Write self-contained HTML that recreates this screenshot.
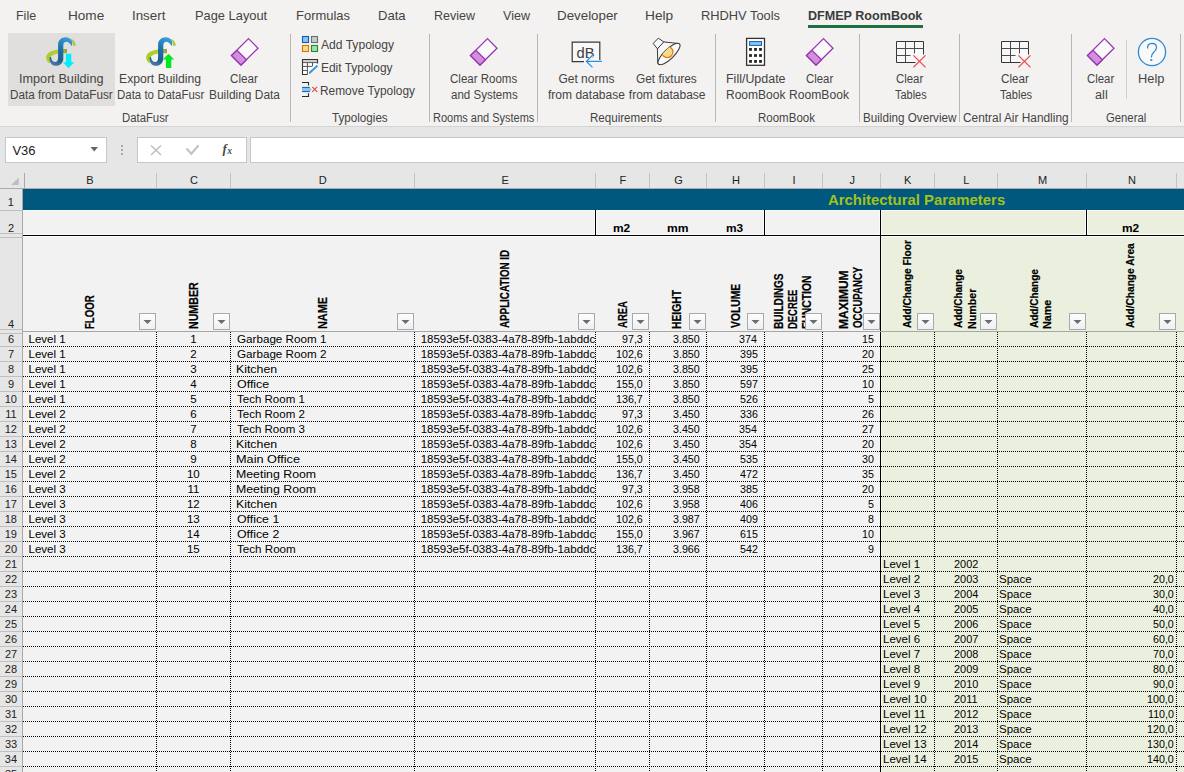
<!DOCTYPE html>
<html><head><meta charset="utf-8"><style>
html,body{margin:0;padding:0;width:1184px;height:772px;overflow:hidden;background:#f3f2f1;font-family:"Liberation Sans",sans-serif;}
.a{position:absolute}
.t{position:absolute;white-space:nowrap;transform-origin:0 0}
.fb{width:17px;height:17px;box-sizing:border-box;border:1px solid #a9a9a9;background:linear-gradient(#fdfdfd,#eef0f4)}
</style></head><body>
<div class="a" style="left:0px;top:0px;width:1184px;height:126px;background:#f3f2f1;"></div>
<div class="t" style="left:15.97px;top:9px;font-size:13px;line-height:13px;color:#444444;transform:scaleX(0.9583);">File</div>
<div class="t" style="left:67.88px;top:9px;font-size:13px;line-height:13px;color:#444444;transform:scaleX(1.0438);">Home</div>
<div class="t" style="left:131.77px;top:9px;font-size:13px;line-height:13px;color:#444444;transform:scaleX(1.0256);">Insert</div>
<div class="t" style="left:194.94px;top:9px;font-size:13px;line-height:13px;color:#444444;transform:scaleX(0.9885);">Page Layout</div>
<div class="t" style="left:295.93px;top:9px;font-size:13px;line-height:13px;color:#444444;transform:scaleX(0.9972);">Formulas</div>
<div class="t" style="left:377.92px;top:9px;font-size:13px;line-height:13px;color:#444444;transform:scaleX(1.0042);">Data</div>
<div class="t" style="left:433.97px;top:9px;font-size:13px;line-height:13px;color:#444444;transform:scaleX(0.9615);">Review</div>
<div class="t" style="left:502.94px;top:9px;font-size:13px;line-height:13px;color:#444444;transform:scaleX(0.9671);">View</div>
<div class="t" style="left:556.90px;top:9px;font-size:13px;line-height:13px;color:#444444;transform:scaleX(1.0262);">Developer</div>
<div class="t" style="left:644.87px;top:9px;font-size:13px;line-height:13px;color:#444444;transform:scaleX(1.0548);">Help</div>
<div class="t" style="left:700.94px;top:9px;font-size:13px;line-height:13px;color:#444444;transform:scaleX(0.9882);">RHDHV Tools</div>
<div class="t" style="left:807.65px;top:9px;font-size:13px;line-height:13px;color:#3c3c3c;font-weight:bold;transform:scaleX(0.9671);">DFMEP RoomBook</div>
<div class="a" style="left:808px;top:25px;width:115px;height:3px;background:#1d7044;"></div>
<div class="a" style="left:8px;top:33px;width:107px;height:73px;background:#e1dfdd;"></div>
<div class="a" style="left:290px;top:34px;width:1px;height:88px;background:#b9b7b5;"></div>
<div class="a" style="left:429px;top:34px;width:1px;height:88px;background:#b9b7b5;"></div>
<div class="a" style="left:537px;top:34px;width:1px;height:88px;background:#b9b7b5;"></div>
<div class="a" style="left:715px;top:34px;width:1px;height:88px;background:#b9b7b5;"></div>
<div class="a" style="left:859px;top:34px;width:1px;height:88px;background:#b9b7b5;"></div>
<div class="a" style="left:959px;top:34px;width:1px;height:88px;background:#b9b7b5;"></div>
<div class="a" style="left:1071px;top:34px;width:1px;height:88px;background:#b9b7b5;"></div>
<div class="a" style="left:1180px;top:34px;width:1px;height:88px;background:#b9b7b5;"></div>
<div class="a" style="left:1126px;top:40px;width:1px;height:59px;background:#d2d0ce;"></div>
<svg class="a" style="left:40px;top:32px" width="40" height="40" viewBox="0 0 40 40"><defs>
<linearGradient id="iab" gradientUnits="userSpaceOnUse" x1="28" y1="5" x2="14" y2="34"><stop offset="0" stop-color="#3f9fdc"/><stop offset="0.4" stop-color="#1b74b0"/><stop offset="0.75" stop-color="#205e8c"/><stop offset="1" stop-color="#4d80a6"/></linearGradient>
<linearGradient id="iag" gradientUnits="userSpaceOnUse" x1="6" y1="28" x2="27" y2="19"><stop offset="0" stop-color="#a9cf1c"/><stop offset="0.6" stop-color="#b3cc3a"/><stop offset="1" stop-color="#9a9f3c"/></linearGradient>
</defs>
<path d="M27,17 L27,21.2 C21,21 13.5,21.3 11,24.5 C9.8,26.5 9.6,29 9.6,31.8 C7,29.5 5.8,27 6.2,24.5 C7.5,18.5 17,17 27,17 Z" fill="url(#iag)"/>
<path d="M30.8,6.6 C33.6,7.8 35.4,10.5 35.8,13.6 L33.4,13.9 C33.1,11.2 32.3,9 30.8,6.6 Z" fill="#a6c62a"/>
<path d="M31.8,14.2 C33.5,9 30.5,5.2 25.8,5.2 C21,5.2 18.1,8.5 18.1,12.5 L18.1,25.5 C18.1,28.5 17,30 15,30 C12.5,30 11.5,28 10.9,24.8 L9.6,25.2 C8.9,30 11.5,33.8 16,33.8 C20.5,33.8 23.3,30.5 23.3,26.5 L23.3,13.5 C23.3,11 24.5,9.8 26.3,9.8 C28.5,9.8 30,11.5 31.8,14.2 Z" fill="url(#iab)"/>
<path d="M25.9,21.8 H31.3 V30.3 H34.2 L28.5,36.3 L22.8,30.3 H25.9 Z" fill="#00eeff"/></svg>
<div class="t" style="left:18.83px;top:73px;font-size:12px;line-height:12px;color:#444444;transform:scaleX(1.0553);">Import Building</div>
<div class="t" style="left:9.54px;top:89px;font-size:12px;line-height:12px;color:#444444;transform:scaleX(0.9742);">Data from DataFusr</div>
<svg class="a" style="left:140px;top:32px" width="40" height="40" viewBox="0 0 40 40"><defs>
<linearGradient id="ibb" gradientUnits="userSpaceOnUse" x1="28" y1="5" x2="14" y2="34"><stop offset="0" stop-color="#3f9fdc"/><stop offset="0.4" stop-color="#1b74b0"/><stop offset="0.75" stop-color="#205e8c"/><stop offset="1" stop-color="#4d80a6"/></linearGradient>
<linearGradient id="ibg" gradientUnits="userSpaceOnUse" x1="6" y1="28" x2="27" y2="19"><stop offset="0" stop-color="#a9cf1c"/><stop offset="0.6" stop-color="#b3cc3a"/><stop offset="1" stop-color="#9a9f3c"/></linearGradient>
</defs>
<path d="M27,17 L27,21.2 C21,21 13.5,21.3 11,24.5 C9.8,26.5 9.6,29 9.6,31.8 C7,29.5 5.8,27 6.2,24.5 C7.5,18.5 17,17 27,17 Z" fill="url(#ibg)"/>
<path d="M30.8,6.6 C33.6,7.8 35.4,10.5 35.8,13.6 L33.4,13.9 C33.1,11.2 32.3,9 30.8,6.6 Z" fill="#a6c62a"/>
<path d="M31.8,14.2 C33.5,9 30.5,5.2 25.8,5.2 C21,5.2 18.1,8.5 18.1,12.5 L18.1,25.5 C18.1,28.5 17,30 15,30 C12.5,30 11.5,28 10.9,24.8 L9.6,25.2 C8.9,30 11.5,33.8 16,33.8 C20.5,33.8 23.3,30.5 23.3,26.5 L23.3,13.5 C23.3,11 24.5,9.8 26.3,9.8 C28.5,9.8 30,11.5 31.8,14.2 Z" fill="url(#ibb)"/>
<path d="M28.5,21.8 L34.2,27.5 H31.3 V36 H25.9 V27.5 H22.8 Z" fill="#00e81e"/></svg>
<div class="t" style="left:119.49px;top:73px;font-size:12px;line-height:12px;color:#444444;transform:scaleX(1.0163);">Export Building</div>
<div class="t" style="left:116.55px;top:89px;font-size:12px;line-height:12px;color:#444444;transform:scaleX(0.9561);">Data to DataFusr</div>
<svg class="a" style="left:226px;top:34px" width="36" height="36" viewBox="0 0 36 36"><polygon points="22.5,4.6 32,14.2 15,31 5.5,21.5" fill="#fafafa" stroke="#9b35b3" stroke-width="1.3" stroke-linejoin="miter"/>
<polygon points="5.5,21.5 11,16.3 20.5,25.8 15,31" fill="#d48fdc" stroke="#9b35b3" stroke-width="1.3"/></svg>
<div class="t" style="left:230.42px;top:73px;font-size:12px;line-height:12px;color:#444444;transform:scaleX(0.9677);">Clear</div>
<div class="t" style="left:208.52px;top:89px;font-size:12px;line-height:12px;color:#444444;transform:scaleX(0.9942);">Building Data</div>
<svg class="a" style="left:298px;top:32px" width="24" height="24" viewBox="0 0 24 24"><rect x="4.5" y="4.5" width="6" height="6" fill="#8ec3ef" stroke="#0a62b8" stroke-width="1.1"/>
<rect x="13.5" y="4.5" width="6" height="6" fill="#cacaca" stroke="#6e6e6e" stroke-width="1.1"/>
<rect x="4.5" y="13.5" width="6" height="6" fill="#f7dc8e" stroke="#e07008" stroke-width="1.1"/>
<rect x="13.5" y="13.5" width="6" height="6" fill="#a2dfab" stroke="#1f8a3a" stroke-width="1.1"/></svg>
<div class="t" style="left:320.97px;top:39px;font-size:12px;line-height:12px;color:#444444;transform:scaleX(1.0076);">Add Typology</div>
<svg class="a" style="left:298px;top:56px" width="24" height="24" viewBox="0 0 24 24"><path d="M4.5,3.5 H19.5 V9 L10,18.5 H4.5 Z" fill="#fff"/>
<rect x="5" y="4" width="14.5" height="2.4" fill="#cfcfcf"/>
<path d="M9.5,18.5 H4.5 V3.5 H19.5 V7.5" fill="none" stroke="#333" stroke-width="1.1"/>
<path d="M4.5,6.6 H19.5 M4.5,10.4 H14 M4.5,14.4 H10 M9.4,6.6 V18.5 M14.5,6.6 V10.4" stroke="#555" stroke-width="1" fill="none"/>
<path d="M9.8,19.3 L10.6,15.2 L17.6,8.4 Q19.2,7.4 20.2,8.6 Q21,9.8 19.9,11.2 L13,18 Z" fill="#fff" opacity="0.9"/>
<path d="M10.8,18.3 L11.4,15.8 L18.1,9.4 Q19,8.8 19.6,9.4 Q20.1,10.1 19.4,10.9 L12.7,17.3 Z" fill="#1f86d6"/>
<path d="M12.6,15.9 L18.6,10.2" stroke="#bfe0f8" stroke-width="0.7" stroke-dasharray="1,1"/></svg>
<div class="t" style="left:320.51px;top:62px;font-size:12px;line-height:12px;color:#444444;transform:scaleX(0.9958);">Edit Typology</div>
<svg class="a" style="left:298px;top:78px" width="24" height="24" viewBox="0 0 24 24"><path d="M4,4.5 H10.5 V7.5 M4,18.5 H10.5 V15.3" fill="none" stroke="#2a2a2a" stroke-width="1.1"/>
<path d="M4,9.3 H11.8 L13.6,11.5 L11.8,13.7 H4 Z" fill="#8cc3ef"/>
<path d="M4,9.4 H11.8 M4,13.6 H11.8" stroke="#0a62b8" stroke-width="1"/>
<path d="M14.3,8.9 L19.2,13.8 M19.2,8.9 L14.3,13.8" stroke="#e84545" stroke-width="1.1"/></svg>
<div class="t" style="left:320.02px;top:85px;font-size:12px;line-height:12px;color:#444444;transform:scaleX(0.9916);">Remove Typology</div>
<svg class="a" style="left:465px;top:34px" width="36" height="36" viewBox="0 0 36 36"><polygon points="22.5,4.6 32,14.2 15,31 5.5,21.5" fill="#fafafa" stroke="#9b35b3" stroke-width="1.3" stroke-linejoin="miter"/>
<polygon points="5.5,21.5 11,16.3 20.5,25.8 15,31" fill="#d48fdc" stroke="#9b35b3" stroke-width="1.3"/></svg>
<div class="t" style="left:449.92px;top:73px;font-size:12px;line-height:12px;color:#444444;transform:scaleX(0.9601);">Clear Rooms</div>
<div class="t" style="left:450.51px;top:89px;font-size:12px;line-height:12px;color:#444444;transform:scaleX(0.9608);">and Systems</div>
<svg class="a" style="left:568px;top:36px" width="38" height="38" viewBox="0 0 38 38"><path d="M16,25.6 H4.2 V6.2 H31.8 V23.9" fill="#f8f8f8" stroke="#383838" stroke-width="1.2"/>
<text x="8.5" y="21.6" font-family="Liberation Sans" font-size="15.5" fill="#404040" textLength="18" lengthAdjust="spacingAndGlyphs">dB</text>
<path d="M34,25.4 H18.4 M24.5,19.3 L18.4,25.4 L24.5,31.4" fill="none" stroke="#f8f8f8" stroke-width="2.6"/>
<path d="M34,25.4 H18.4 M24.5,19.3 L18.4,25.4 L24.5,31.4" fill="none" stroke="#2b8fd6" stroke-width="1.3"/></svg>
<div class="t" style="left:558.40px;top:73px;font-size:12px;line-height:12px;color:#444444;">Get norms</div>
<div class="t" style="left:547.57px;top:89px;font-size:12px;line-height:12px;color:#444444;transform:scaleX(1.0030);">from database</div>
<svg class="a" style="left:648px;top:34px" width="38" height="38" viewBox="0 0 38 38"><defs><clipPath id="lampc"><ellipse cx="21" cy="20" rx="14.6" ry="4.9" transform="rotate(-44 21 20)"/></clipPath></defs>
<path d="M9.4,14.8 L15.8,7.9 L29.5,9.4 L31.5,11 L10.5,30.5 L9.8,29 Z" fill="#f8f8f8" stroke="#3a3a3a" stroke-width="1" stroke-linejoin="round"/>
<ellipse cx="21" cy="20" rx="14.6" ry="4.9" transform="rotate(-44 21 20)" fill="#fafafa" stroke="#3a3a3a" stroke-width="1.1"/>
<g clip-path="url(#lampc)"><circle cx="19.3" cy="18" r="5.6" fill="#f7d98a" stroke="#e3780e" stroke-width="1.2"/></g>
<path d="M5.2,9.4 L10.3,4.2 L15.8,7.9 L9.4,14.8 Z" fill="#f8f8f8" stroke="#3a3a3a" stroke-width="1" stroke-linejoin="round"/></svg>
<div class="t" style="left:636.41px;top:73px;font-size:12px;line-height:12px;color:#444444;transform:scaleX(0.9904);">Get fixtures</div>
<div class="t" style="left:628.82px;top:89px;font-size:12px;line-height:12px;color:#444444;">from database</div>
<svg class="a" style="left:738px;top:34px" width="34" height="34" viewBox="0 0 34 34"><rect x="8.6" y="4.4" width="17.9" height="26.9" fill="#fff" stroke="#333" stroke-width="1.3"/>
<rect x="11.6" y="7.6" width="11.9" height="3.8" fill="#8cc4f0" stroke="#0a62b8" stroke-width="1"/><rect x="11.1" y="14.0" width="2.8" height="2.8" fill="#222"/><rect x="16.1" y="14.0" width="2.8" height="2.8" fill="#222"/><rect x="21.1" y="14.0" width="2.8" height="2.8" fill="#222"/><rect x="11.1" y="20.1" width="2.8" height="2.8" fill="#222"/><rect x="16.1" y="20.1" width="2.8" height="2.8" fill="#222"/><rect x="21.1" y="20.1" width="2.8" height="2.8" fill="#222"/><rect x="11.1" y="26.0" width="2.8" height="2.8" fill="#222"/><rect x="16.1" y="26.0" width="2.8" height="2.8" fill="#222"/><rect x="21.1" y="26.0" width="2.8" height="2.8" fill="#222"/></svg>
<div class="t" style="left:725.97px;top:73px;font-size:12px;line-height:12px;color:#444444;transform:scaleX(1.0383);">Fill/Update</div>
<div class="t" style="left:725.51px;top:89px;font-size:12px;line-height:12px;color:#444444;transform:scaleX(1.0021);">RoomBook</div>
<svg class="a" style="left:801px;top:34px" width="36" height="36" viewBox="0 0 36 36"><polygon points="22.5,4.6 32,14.2 15,31 5.5,21.5" fill="#fafafa" stroke="#9b35b3" stroke-width="1.3" stroke-linejoin="miter"/>
<polygon points="5.5,21.5 11,16.3 20.5,25.8 15,31" fill="#d48fdc" stroke="#9b35b3" stroke-width="1.3"/></svg>
<div class="t" style="left:805.93px;top:73px;font-size:12px;line-height:12px;color:#444444;transform:scaleX(0.9498);">Clear</div>
<div class="t" style="left:789.00px;top:89px;font-size:12px;line-height:12px;color:#444444;transform:scaleX(1.0106);">RoomBook</div>
<svg class="a" style="left:892px;top:36px" width="38" height="38" viewBox="0 0 38 38"><path d="M4.5,5.5 H31.5 V18.5 L23.5,26.5 H4.5 Z" fill="#f8f8f8"/>
<path d="M23.5,26.5 H4.5 V5.5 H31.5 V18.5" fill="none" stroke="#363636" stroke-width="1"/>
<path d="M4.5,12.5 H31.5 M4.5,19.5 H18.5 M13.5,5.5 V26.5 M22.5,5.5 V17.5" fill="none" stroke="#4a4a4a" stroke-width="1"/>
<path d="M21.4,19.4 L33.5,31.4 M33.5,19.4 L21.4,31.4" stroke="#e94a52" stroke-width="1.3"/></svg>
<div class="t" style="left:895.93px;top:73px;font-size:12px;line-height:12px;color:#444444;transform:scaleX(0.9498);">Clear</div>
<div class="t" style="left:894.50px;top:89px;font-size:12px;line-height:12px;color:#444444;transform:scaleX(0.9120);">Tables</div>
<svg class="a" style="left:997px;top:36px" width="38" height="38" viewBox="0 0 38 38"><path d="M4.5,5.5 H31.5 V18.5 L23.5,26.5 H4.5 Z" fill="#f8f8f8"/>
<path d="M23.5,26.5 H4.5 V5.5 H31.5 V18.5" fill="none" stroke="#363636" stroke-width="1"/>
<path d="M4.5,12.5 H31.5 M4.5,19.5 H18.5 M13.5,5.5 V26.5 M22.5,5.5 V17.5" fill="none" stroke="#4a4a4a" stroke-width="1"/>
<path d="M21.4,19.4 L33.5,31.4 M33.5,19.4 L21.4,31.4" stroke="#e94a52" stroke-width="1.3"/></svg>
<div class="t" style="left:1001.42px;top:73px;font-size:12px;line-height:12px;color:#444444;transform:scaleX(0.9677);">Clear</div>
<div class="t" style="left:1000.25px;top:89px;font-size:12px;line-height:12px;color:#444444;transform:scaleX(0.9267);">Tables</div>
<svg class="a" style="left:1082px;top:34px" width="36" height="36" viewBox="0 0 36 36"><polygon points="22.5,4.6 32,14.2 15,31 5.5,21.5" fill="#fafafa" stroke="#9b35b3" stroke-width="1.3" stroke-linejoin="miter"/>
<polygon points="5.5,21.5 11,16.3 20.5,25.8 15,31" fill="#d48fdc" stroke="#9b35b3" stroke-width="1.3"/></svg>
<div class="t" style="left:1086.93px;top:73px;font-size:12px;line-height:12px;color:#444444;transform:scaleX(0.9498);">Clear</div>
<div class="t" style="left:1094.76px;top:89px;font-size:12px;line-height:12px;color:#444444;transform:scaleX(1.0581);">all</div>
<svg class="a" style="left:1134px;top:34px" width="36" height="36" viewBox="0 0 36 36"><circle cx="18" cy="18" r="13.6" fill="#f9f9f9" stroke="#2b8ad6" stroke-width="1.3"/>
<path d="M13.6,14.5 Q13.2,9.5 18,9.4 Q22.5,9.5 22.5,13.5 Q22.5,16 19.5,18.5 Q17.3,20.5 17.3,23.5" fill="none" stroke="#2b8ad6" stroke-width="1.3"/>
<rect x="16.3" y="25.1" width="2" height="1.8" fill="#2b8ad6"/></svg>
<div class="t" style="left:1137.94px;top:73px;font-size:12px;line-height:12px;color:#444444;transform:scaleX(1.0694);">Help</div>
<div class="t" style="left:121.57px;top:111.75px;font-size:12px;line-height:12px;color:#444444;transform:scaleX(0.9444);">DataFusr</div>
<div class="t" style="left:331.74px;top:111.75px;font-size:12px;line-height:12px;color:#444444;transform:scaleX(0.9705);">Typologies</div>
<div class="t" style="left:432.59px;top:111.75px;font-size:12px;line-height:12px;color:#444444;transform:scaleX(0.9150);">Rooms and Systems</div>
<div class="t" style="left:590.04px;top:111.75px;font-size:12px;line-height:12px;color:#444444;transform:scaleX(0.9653);">Requirements</div>
<div class="t" style="left:758.05px;top:111.75px;font-size:12px;line-height:12px;color:#444444;transform:scaleX(0.9592);">RoomBook</div>
<div class="t" style="left:862.54px;top:111.75px;font-size:12px;line-height:12px;color:#444444;transform:scaleX(0.9727);">Building Overview</div>
<div class="t" style="left:962.91px;top:111.75px;font-size:12px;line-height:12px;color:#444444;transform:scaleX(0.9895);">Central Air Handling</div>
<div class="t" style="left:1106.03px;top:111.75px;font-size:12px;line-height:12px;color:#444444;transform:scaleX(0.9423);">General</div>
<div class="a" style="left:0px;top:126px;width:1184px;height:1px;background:#d6d4d2;"></div>
<div class="a" style="left:0px;top:127px;width:1184px;height:45px;background:#e6e6e6;"></div>
<div class="a" style="left:5px;top:137px;width:102px;height:26px;background:#fff;box-sizing:border-box;border:1px solid #c6c6c6;"></div>
<div class="t" style="left:12.43px;top:144px;font-size:13px;line-height:13px;color:#222;">V36</div>
<svg class="a" style="left:88px;top:144px" width="12" height="10" viewBox="0 0 12 10"><path d="M2.5,3 H10 L6.25,7.5 Z" fill="#666"/></svg>
<div class="a" style="left:121px;top:145px;width:2px;height:2px;background:#a6a6a6;"></div>
<div class="a" style="left:121px;top:149px;width:2px;height:2px;background:#a6a6a6;"></div>
<div class="a" style="left:121px;top:153px;width:2px;height:2px;background:#a6a6a6;"></div>
<div class="a" style="left:137px;top:137px;width:110px;height:26px;background:#fff;box-sizing:border-box;border:1px solid #c6c6c6;"></div>
<svg class="a" style="left:148px;top:143px" width="16" height="14" viewBox="0 0 16 14"><path d="M3,2.5 L13,12 M13,2.5 L3,12" stroke="#bdbdbd" stroke-width="1.4"/></svg>
<svg class="a" style="left:184px;top:143px" width="18" height="14" viewBox="0 0 18 14"><path d="M2.5,5.5 L7.3,10.8 L14.6,2.3" fill="none" stroke="#c4c4c4" stroke-width="2.2"/></svg>
<svg class="a" style="left:218px;top:140px" width="20" height="20"><text x="4.5" y="13.4" font-family="Liberation Serif" font-style="italic" font-weight="bold" font-size="13" fill="#4a4a4a">f</text><text x="9.3" y="13.7" font-family="Liberation Serif" font-style="italic" font-weight="bold" font-size="9.5" fill="#4a4a4a">x</text></svg>
<div class="a" style="left:250px;top:137px;width:940px;height:26px;background:#fff;box-sizing:border-box;border:1px solid #c6c6c6;"></div>
<div class="a" style="left:0px;top:172px;width:1184px;height:16px;background:#e6e6e6;"></div>
<div class="a" style="left:0px;top:188px;width:1184px;height:1px;background:#ababab;"></div>
<svg class="a" style="left:8px;top:174px" width="14" height="14" viewBox="0 0 14 14"><path d="M3,11 H10.75 V3.5 Z" fill="#bdbdbd"/></svg>
<div class="a" style="left:24px;top:173px;width:1px;height:15px;background:#a9a9a9;"></div>
<div class="a" style="left:156px;top:173px;width:1px;height:15px;background:#c4c4c4;"></div>
<div class="t" style="left:86.16px;top:175px;font-size:11px;line-height:11px;color:#222;">B</div>
<div class="a" style="left:230px;top:173px;width:1px;height:15px;background:#c4c4c4;"></div>
<div class="t" style="left:189.96px;top:175px;font-size:11px;line-height:11px;color:#222;">C</div>
<div class="a" style="left:414px;top:173px;width:1px;height:15px;background:#c4c4c4;"></div>
<div class="t" style="left:318.83px;top:175px;font-size:11px;line-height:11px;color:#222;">D</div>
<div class="a" style="left:595px;top:173px;width:1px;height:15px;background:#c4c4c4;"></div>
<div class="t" style="left:501.61px;top:175px;font-size:11px;line-height:11px;color:#222;">E</div>
<div class="a" style="left:649px;top:173px;width:1px;height:15px;background:#c4c4c4;"></div>
<div class="t" style="left:619.41px;top:175px;font-size:11px;line-height:11px;color:#222;">F</div>
<div class="a" style="left:706px;top:173px;width:1px;height:15px;background:#c4c4c4;"></div>
<div class="t" style="left:674.36px;top:175px;font-size:11px;line-height:11px;color:#222;">G</div>
<div class="a" style="left:764px;top:173px;width:1px;height:15px;background:#c4c4c4;"></div>
<div class="t" style="left:732.03px;top:175px;font-size:11px;line-height:11px;color:#222;">H</div>
<div class="a" style="left:822px;top:173px;width:1px;height:15px;background:#c4c4c4;"></div>
<div class="t" style="left:792.47px;top:175px;font-size:11px;line-height:11px;color:#222;">I</div>
<div class="a" style="left:880px;top:173px;width:1px;height:15px;background:#c4c4c4;"></div>
<div class="t" style="left:849.58px;top:175px;font-size:11px;line-height:11px;color:#222;">J</div>
<div class="a" style="left:934px;top:173px;width:1px;height:15px;background:#c4c4c4;"></div>
<div class="t" style="left:903.94px;top:175px;font-size:11px;line-height:11px;color:#222;">K</div>
<div class="a" style="left:997px;top:173px;width:1px;height:15px;background:#c4c4c4;"></div>
<div class="t" style="left:963.17px;top:175px;font-size:11px;line-height:11px;color:#222;">L</div>
<div class="a" style="left:1086px;top:173px;width:1px;height:15px;background:#c4c4c4;"></div>
<div class="t" style="left:1037.92px;top:175px;font-size:11px;line-height:11px;color:#222;">M</div>
<div class="a" style="left:1176px;top:173px;width:1px;height:15px;background:#c4c4c4;"></div>
<div class="t" style="left:1128.03px;top:175px;font-size:11px;line-height:11px;color:#222;">N</div>
<div class="a" style="left:0px;top:189px;width:22px;height:583px;background:#e6e6e6;"></div>
<div class="a" style="left:22px;top:189px;width:1px;height:583px;background:#a8a8a8;"></div>
<div class="a" style="left:0px;top:210px;width:22px;height:1px;background:#c0c0c0;"></div>
<div class="a" style="left:0px;top:233px;width:22px;height:1px;background:#c0c0c0;"></div>
<div class="a" style="left:0px;top:237px;width:22px;height:1px;background:#c0c0c0;"></div>
<div class="a" style="left:0px;top:329px;width:22px;height:1px;background:#c0c0c0;"></div>
<div class="a" style="left:0px;top:333px;width:22px;height:1px;background:#c0c0c0;"></div>
<div class="t" style="left:7.80px;top:197px;font-size:11px;line-height:11px;color:#222;">1</div>
<div class="t" style="left:7.95px;top:223px;font-size:11px;line-height:11px;color:#222;">2</div>
<div class="t" style="left:7.98px;top:319px;font-size:11px;line-height:11px;color:#222;">4</div>
<div class="a" style="left:0px;top:346px;width:22px;height:1px;background:#c0c0c0;"></div>
<div class="t" style="left:7.91px;top:334px;font-size:11px;line-height:11px;color:#222;">6</div>
<div class="a" style="left:0px;top:361px;width:22px;height:1px;background:#c0c0c0;"></div>
<div class="t" style="left:7.95px;top:349px;font-size:11px;line-height:11px;color:#222;">7</div>
<div class="a" style="left:0px;top:376px;width:22px;height:1px;background:#c0c0c0;"></div>
<div class="t" style="left:7.95px;top:364px;font-size:11px;line-height:11px;color:#222;">8</div>
<div class="a" style="left:0px;top:391px;width:22px;height:1px;background:#c0c0c0;"></div>
<div class="t" style="left:7.93px;top:379px;font-size:11px;line-height:11px;color:#222;">9</div>
<div class="a" style="left:0px;top:406px;width:22px;height:1px;background:#c0c0c0;"></div>
<div class="t" style="left:4.69px;top:394px;font-size:11px;line-height:11px;color:#222;">10</div>
<div class="a" style="left:0px;top:421px;width:22px;height:1px;background:#c0c0c0;"></div>
<div class="t" style="left:5.14px;top:409px;font-size:11px;line-height:11px;color:#222;">11</div>
<div class="a" style="left:0px;top:436px;width:22px;height:1px;background:#c0c0c0;"></div>
<div class="t" style="left:4.76px;top:424px;font-size:11px;line-height:11px;color:#222;">12</div>
<div class="a" style="left:0px;top:451px;width:22px;height:1px;background:#c0c0c0;"></div>
<div class="t" style="left:4.72px;top:439px;font-size:11px;line-height:11px;color:#222;">13</div>
<div class="a" style="left:0px;top:466px;width:22px;height:1px;background:#c0c0c0;"></div>
<div class="t" style="left:4.63px;top:454px;font-size:11px;line-height:11px;color:#222;">14</div>
<div class="a" style="left:0px;top:481px;width:22px;height:1px;background:#c0c0c0;"></div>
<div class="t" style="left:4.70px;top:469px;font-size:11px;line-height:11px;color:#222;">15</div>
<div class="a" style="left:0px;top:496px;width:22px;height:1px;background:#c0c0c0;"></div>
<div class="t" style="left:4.72px;top:484px;font-size:11px;line-height:11px;color:#222;">16</div>
<div class="a" style="left:0px;top:511px;width:22px;height:1px;background:#c0c0c0;"></div>
<div class="t" style="left:4.76px;top:499px;font-size:11px;line-height:11px;color:#222;">17</div>
<div class="a" style="left:0px;top:526px;width:22px;height:1px;background:#c0c0c0;"></div>
<div class="t" style="left:4.72px;top:514px;font-size:11px;line-height:11px;color:#222;">18</div>
<div class="a" style="left:0px;top:541px;width:22px;height:1px;background:#c0c0c0;"></div>
<div class="t" style="left:4.73px;top:529px;font-size:11px;line-height:11px;color:#222;">19</div>
<div class="a" style="left:0px;top:556px;width:22px;height:1px;background:#c0c0c0;"></div>
<div class="t" style="left:4.83px;top:544px;font-size:11px;line-height:11px;color:#222;">20</div>
<div class="a" style="left:0px;top:571px;width:22px;height:1px;background:#c0c0c0;"></div>
<div class="t" style="left:4.88px;top:559px;font-size:11px;line-height:11px;color:#222;">21</div>
<div class="a" style="left:0px;top:586px;width:22px;height:1px;background:#c0c0c0;"></div>
<div class="t" style="left:4.89px;top:574px;font-size:11px;line-height:11px;color:#222;">22</div>
<div class="a" style="left:0px;top:601px;width:22px;height:1px;background:#c0c0c0;"></div>
<div class="t" style="left:4.85px;top:589px;font-size:11px;line-height:11px;color:#222;">23</div>
<div class="a" style="left:0px;top:616px;width:22px;height:1px;background:#c0c0c0;"></div>
<div class="t" style="left:4.77px;top:604px;font-size:11px;line-height:11px;color:#222;">24</div>
<div class="a" style="left:0px;top:631px;width:22px;height:1px;background:#c0c0c0;"></div>
<div class="t" style="left:4.84px;top:619px;font-size:11px;line-height:11px;color:#222;">25</div>
<div class="a" style="left:0px;top:646px;width:22px;height:1px;background:#c0c0c0;"></div>
<div class="t" style="left:4.85px;top:634px;font-size:11px;line-height:11px;color:#222;">26</div>
<div class="a" style="left:0px;top:661px;width:22px;height:1px;background:#c0c0c0;"></div>
<div class="t" style="left:4.89px;top:649px;font-size:11px;line-height:11px;color:#222;">27</div>
<div class="a" style="left:0px;top:676px;width:22px;height:1px;background:#c0c0c0;"></div>
<div class="t" style="left:4.85px;top:664px;font-size:11px;line-height:11px;color:#222;">28</div>
<div class="a" style="left:0px;top:691px;width:22px;height:1px;background:#c0c0c0;"></div>
<div class="t" style="left:4.87px;top:679px;font-size:11px;line-height:11px;color:#222;">29</div>
<div class="a" style="left:0px;top:706px;width:22px;height:1px;background:#c0c0c0;"></div>
<div class="t" style="left:4.89px;top:694px;font-size:11px;line-height:11px;color:#222;">30</div>
<div class="a" style="left:0px;top:721px;width:22px;height:1px;background:#c0c0c0;"></div>
<div class="t" style="left:4.95px;top:709px;font-size:11px;line-height:11px;color:#222;">31</div>
<div class="a" style="left:0px;top:736px;width:22px;height:1px;background:#c0c0c0;"></div>
<div class="t" style="left:4.96px;top:724px;font-size:11px;line-height:11px;color:#222;">32</div>
<div class="a" style="left:0px;top:751px;width:22px;height:1px;background:#c0c0c0;"></div>
<div class="t" style="left:4.92px;top:739px;font-size:11px;line-height:11px;color:#222;">33</div>
<div class="a" style="left:0px;top:766px;width:22px;height:1px;background:#c0c0c0;"></div>
<div class="t" style="left:4.84px;top:754px;font-size:11px;line-height:11px;color:#222;">34</div>
<div class="a" style="left:0px;top:781px;width:22px;height:1px;background:#c0c0c0;"></div>
<div class="t" style="left:4.91px;top:769px;font-size:11px;line-height:11px;color:#222;">35</div>
<div class="a" style="left:23px;top:189px;width:1161px;height:21px;background:#00587e;"></div>
<div class="a" style="left:23px;top:210px;width:1161px;height:1px;background:#fafafa;"></div>
<div class="a" style="left:23px;top:211px;width:858px;height:121px;background:#f2f2f2;"></div>
<div class="a" style="left:881px;top:211px;width:303px;height:121px;background:#ebf0de;"></div>
<div class="a" style="left:23px;top:332px;width:858px;height:440px;background:#f2f2f2;"></div>
<div class="a" style="left:881px;top:332px;width:303px;height:440px;background:#ebf0de;"></div>
<div class="t" style="left:828.13px;top:192px;font-size:15px;line-height:15px;color:#a3c21a;font-weight:bold;transform:scaleX(0.9930);">Architectural Parameters</div>
<div class="a" style="left:23px;top:235px;width:1161px;height:1px;background:#000;"></div>
<div class="a" style="left:23px;top:234px;width:1161px;height:1px;background:#fdfdfd;"></div>
<div class="a" style="left:23px;top:236px;width:1161px;height:1px;background:#fdfdfd;"></div>
<div class="a" style="left:594px;top:211px;width:3px;height:24px;background:#fbfbfb;"></div>
<div class="a" style="left:595px;top:210px;width:1px;height:26px;background:#000;"></div>
<div class="a" style="left:763px;top:211px;width:3px;height:24px;background:#fbfbfb;"></div>
<div class="a" style="left:764px;top:210px;width:1px;height:26px;background:#000;"></div>
<div class="a" style="left:1085px;top:211px;width:3px;height:24px;background:#fbfbfb;"></div>
<div class="a" style="left:1086px;top:210px;width:1px;height:26px;background:#000;"></div>
<div class="a" style="left:879px;top:211px;width:3px;height:24px;background:#fbfbfb;"></div>
<div class="a" style="left:881px;top:236px;width:1px;height:536px;background:#f3f6e6;"></div>
<div class="a" style="left:880px;top:210px;width:1px;height:562px;background:#000;"></div>
<div class="a" style="left:23px;top:331px;width:1161px;height:1px;background:#a6a6a6;"></div>
<div class="t" style="left:613.23px;top:223px;font-size:11px;line-height:11px;color:#000;font-weight:bold;transform:scaleX(1.0835);">m2</div>
<div class="t" style="left:667.21px;top:223px;font-size:11px;line-height:11px;color:#000;font-weight:bold;transform:scaleX(1.1003);">mm</div>
<div class="t" style="left:726.23px;top:223px;font-size:11px;line-height:11px;color:#000;font-weight:bold;transform:scaleX(1.0814);">m3</div>
<div class="t" style="left:1122.23px;top:223px;font-size:11px;line-height:11px;color:#000;font-weight:bold;transform:scaleX(1.0835);">m2</div>
<div class="t" style="left:83.97px;top:328.65px;font-size:12px;line-height:12px;color:#000;font-weight:bold;transform:rotate(-90deg) scaleX(0.8003);-webkit-text-stroke:0.2px #000;">FLOOR</div>
<div class="t" style="left:187.60px;top:328.72px;font-size:12px;line-height:12px;color:#000;font-weight:bold;transform:rotate(-90deg) scaleX(0.8866);-webkit-text-stroke:0.2px #000;">NUMBER</div>
<div class="t" style="left:316.85px;top:328.73px;font-size:12px;line-height:12px;color:#000;font-weight:bold;transform:rotate(-90deg) scaleX(0.9031);-webkit-text-stroke:0.2px #000;">NAME</div>
<div class="t" style="left:498.72px;top:328.24px;font-size:12px;line-height:12px;color:#000;font-weight:bold;transform:rotate(-90deg) scaleX(0.8160);-webkit-text-stroke:0.2px #000;">APPLICATION ID</div>
<div class="t" style="left:617.10px;top:328.24px;font-size:12px;line-height:12px;color:#000;font-weight:bold;transform:rotate(-90deg) scaleX(0.7937);-webkit-text-stroke:0.2px #000;">AREA</div>
<div class="t" style="left:671.47px;top:328.70px;font-size:12px;line-height:12px;color:#000;font-weight:bold;transform:rotate(-90deg) scaleX(0.8615);-webkit-text-stroke:0.2px #000;">HEIGHT</div>
<div class="t" style="left:729.72px;top:328.08px;font-size:12px;line-height:12px;color:#000;font-weight:bold;transform:rotate(-90deg) scaleX(0.8619);-webkit-text-stroke:0.2px #000;">VOLUME</div>
<div class="t" style="left:772.97px;top:328.68px;font-size:12px;line-height:12px;color:#000;font-weight:bold;transform:rotate(-90deg) scaleX(0.8422);-webkit-text-stroke:0.2px #000;">BUILDINGS</div>
<div class="t" style="left:787.22px;top:328.64px;font-size:12px;line-height:12px;color:#000;font-weight:bold;transform:rotate(-90deg) scaleX(0.7851);-webkit-text-stroke:0.2px #000;">DECREE</div>
<div class="t" style="left:801.47px;top:328.70px;font-size:12px;line-height:12px;color:#000;font-weight:bold;transform:rotate(-90deg) scaleX(0.8611);-webkit-text-stroke:0.2px #000;">FUNCTION</div>
<div class="t" style="left:838.35px;top:328.81px;font-size:12px;line-height:12px;color:#000;font-weight:bold;transform:rotate(-90deg) scaleX(0.9989);-webkit-text-stroke:0.2px #000;">MAXIMUM</div>
<div class="t" style="left:852.22px;top:328.38px;font-size:12px;line-height:12px;color:#000;font-weight:bold;transform:rotate(-90deg) scaleX(0.8017);-webkit-text-stroke:0.2px #000;">OCCUPANCY</div>
<div class="t" style="left:902.08px;top:328.25px;font-size:11px;line-height:11px;color:#000;font-weight:bold;transform:rotate(-90deg) scaleX(0.9220);-webkit-text-stroke:0.2px #000;">Add/Change Floor</div>
<div class="t" style="left:952.83px;top:328.25px;font-size:11px;line-height:11px;color:#000;font-weight:bold;transform:rotate(-90deg) scaleX(0.9083);-webkit-text-stroke:0.2px #000;">Add/Change</div>
<div class="t" style="left:967.08px;top:328.72px;font-size:11px;line-height:11px;color:#000;font-weight:bold;transform:rotate(-90deg) scaleX(0.9712);-webkit-text-stroke:0.2px #000;">Number</div>
<div class="t" style="left:1028.57px;top:328.25px;font-size:11px;line-height:11px;color:#000;font-weight:bold;transform:rotate(-90deg) scaleX(0.9083);-webkit-text-stroke:0.2px #000;">Add/Change</div>
<div class="t" style="left:1042.41px;top:328.73px;font-size:11px;line-height:11px;color:#000;font-weight:bold;transform:rotate(-90deg) scaleX(0.9793);-webkit-text-stroke:0.2px #000;">Name</div>
<div class="t" style="left:1125.32px;top:328.25px;font-size:11px;line-height:11px;color:#000;font-weight:bold;transform:rotate(-90deg) scaleX(0.9216);-webkit-text-stroke:0.2px #000;">Add/Change Area</div>
<div class="a fb" style="left:139px;top:313px"></div>
<svg class="a" style="left:139px;top:313px" width="17" height="17" viewBox="0 0 17 17"><path d="M4.5,7 H12.5 L8.5,11 Z" fill="#6b6b6b"/></svg>
<div class="a fb" style="left:213px;top:313px"></div>
<svg class="a" style="left:213px;top:313px" width="17" height="17" viewBox="0 0 17 17"><path d="M4.5,7 H12.5 L8.5,11 Z" fill="#6b6b6b"/></svg>
<div class="a fb" style="left:397px;top:313px"></div>
<svg class="a" style="left:397px;top:313px" width="17" height="17" viewBox="0 0 17 17"><path d="M4.5,7 H12.5 L8.5,11 Z" fill="#6b6b6b"/></svg>
<div class="a fb" style="left:578px;top:313px"></div>
<svg class="a" style="left:578px;top:313px" width="17" height="17" viewBox="0 0 17 17"><path d="M4.5,7 H12.5 L8.5,11 Z" fill="#6b6b6b"/></svg>
<div class="a fb" style="left:632px;top:313px"></div>
<svg class="a" style="left:632px;top:313px" width="17" height="17" viewBox="0 0 17 17"><path d="M4.5,7 H12.5 L8.5,11 Z" fill="#6b6b6b"/></svg>
<div class="a fb" style="left:689px;top:313px"></div>
<svg class="a" style="left:689px;top:313px" width="17" height="17" viewBox="0 0 17 17"><path d="M4.5,7 H12.5 L8.5,11 Z" fill="#6b6b6b"/></svg>
<div class="a fb" style="left:747px;top:313px"></div>
<svg class="a" style="left:747px;top:313px" width="17" height="17" viewBox="0 0 17 17"><path d="M4.5,7 H12.5 L8.5,11 Z" fill="#6b6b6b"/></svg>
<div class="a fb" style="left:805px;top:313px"></div>
<svg class="a" style="left:805px;top:313px" width="17" height="17" viewBox="0 0 17 17"><path d="M4.5,7 H12.5 L8.5,11 Z" fill="#6b6b6b"/></svg>
<div class="a fb" style="left:863px;top:313px"></div>
<svg class="a" style="left:863px;top:313px" width="17" height="17" viewBox="0 0 17 17"><path d="M4.5,7 H12.5 L8.5,11 Z" fill="#6b6b6b"/></svg>
<div class="a fb" style="left:917px;top:313px"></div>
<svg class="a" style="left:917px;top:313px" width="17" height="17" viewBox="0 0 17 17"><path d="M4.5,7 H12.5 L8.5,11 Z" fill="#6b6b6b"/></svg>
<div class="a fb" style="left:980px;top:313px"></div>
<svg class="a" style="left:980px;top:313px" width="17" height="17" viewBox="0 0 17 17"><path d="M4.5,7 H12.5 L8.5,11 Z" fill="#6b6b6b"/></svg>
<div class="a fb" style="left:1069px;top:313px"></div>
<svg class="a" style="left:1069px;top:313px" width="17" height="17" viewBox="0 0 17 17"><path d="M4.5,7 H12.5 L8.5,11 Z" fill="#6b6b6b"/></svg>
<div class="a fb" style="left:1159px;top:313px"></div>
<svg class="a" style="left:1159px;top:313px" width="17" height="17" viewBox="0 0 17 17"><path d="M4.5,7 H12.5 L8.5,11 Z" fill="#6b6b6b"/></svg>
<svg class="a" style="left:0;top:0" width="1184" height="772"><g stroke="#000" stroke-width="1" stroke-dasharray="1,1" shape-rendering="crispEdges"><line x1="23" y1="346.5" x2="1184" y2="346.5"/><line x1="23" y1="361.5" x2="1184" y2="361.5"/><line x1="23" y1="376.5" x2="1184" y2="376.5"/><line x1="23" y1="391.5" x2="1184" y2="391.5"/><line x1="23" y1="406.5" x2="1184" y2="406.5"/><line x1="23" y1="421.5" x2="1184" y2="421.5"/><line x1="23" y1="436.5" x2="1184" y2="436.5"/><line x1="23" y1="451.5" x2="1184" y2="451.5"/><line x1="23" y1="466.5" x2="1184" y2="466.5"/><line x1="23" y1="481.5" x2="1184" y2="481.5"/><line x1="23" y1="496.5" x2="1184" y2="496.5"/><line x1="23" y1="511.5" x2="1184" y2="511.5"/><line x1="23" y1="526.5" x2="1184" y2="526.5"/><line x1="23" y1="541.5" x2="1184" y2="541.5"/><line x1="23" y1="556.5" x2="1184" y2="556.5"/><line x1="23" y1="571.5" x2="1184" y2="571.5"/><line x1="23" y1="586.5" x2="1184" y2="586.5"/><line x1="23" y1="601.5" x2="1184" y2="601.5"/><line x1="23" y1="616.5" x2="1184" y2="616.5"/><line x1="23" y1="631.5" x2="1184" y2="631.5"/><line x1="23" y1="646.5" x2="1184" y2="646.5"/><line x1="23" y1="661.5" x2="1184" y2="661.5"/><line x1="23" y1="676.5" x2="1184" y2="676.5"/><line x1="23" y1="691.5" x2="1184" y2="691.5"/><line x1="23" y1="706.5" x2="1184" y2="706.5"/><line x1="23" y1="721.5" x2="1184" y2="721.5"/><line x1="23" y1="736.5" x2="1184" y2="736.5"/><line x1="23" y1="751.5" x2="1184" y2="751.5"/><line x1="23" y1="766.5" x2="1184" y2="766.5"/><line x1="156.5" y1="332" x2="156.5" y2="772"/><line x1="230.5" y1="332" x2="230.5" y2="772"/><line x1="414.5" y1="332" x2="414.5" y2="772"/><line x1="595.5" y1="332" x2="595.5" y2="772"/><line x1="649.5" y1="332" x2="649.5" y2="772"/><line x1="706.5" y1="332" x2="706.5" y2="772"/><line x1="764.5" y1="332" x2="764.5" y2="772"/><line x1="822.5" y1="332" x2="822.5" y2="772"/><line x1="934.5" y1="332" x2="934.5" y2="772"/><line x1="997.5" y1="332" x2="997.5" y2="772"/><line x1="1086.5" y1="332" x2="1086.5" y2="772"/><line x1="1176.5" y1="332" x2="1176.5" y2="772"/></g></svg>
<div class="t" style="left:28.55px;top:334px;font-size:11.5px;line-height:11.5px;color:#000;">Level 1</div>
<div class="t" style="left:190.15px;top:334px;font-size:11.5px;line-height:11.5px;color:#000;">1</div>
<div class="t" style="left:236.82px;top:334px;font-size:11.5px;line-height:11.5px;color:#000;transform:scaleX(1.013);">Garbage Room 1</div>
<div class="t" style="left:622.25px;top:334px;font-size:11.5px;line-height:11.5px;color:#000;transform:scaleX(0.93);">97,3</div>
<div class="t" style="left:673.24px;top:334px;font-size:11.5px;line-height:11.5px;color:#000;transform:scaleX(0.93);">3.850</div>
<div class="t" style="left:739.46px;top:334px;font-size:11.5px;line-height:11.5px;color:#000;transform:scaleX(0.93);">374</div>
<div class="t" style="left:862.06px;top:334px;font-size:11.5px;line-height:11.5px;color:#000;transform:scaleX(0.93);">15</div>
<div class="t" style="left:28.55px;top:349px;font-size:11.5px;line-height:11.5px;color:#000;">Level 1</div>
<div class="t" style="left:190.31px;top:349px;font-size:11.5px;line-height:11.5px;color:#000;">2</div>
<div class="t" style="left:236.82px;top:349px;font-size:11.5px;line-height:11.5px;color:#000;transform:scaleX(1.013);">Garbage Room 2</div>
<div class="t" style="left:616.29px;top:349px;font-size:11.5px;line-height:11.5px;color:#000;transform:scaleX(0.93);">102,6</div>
<div class="t" style="left:673.24px;top:349px;font-size:11.5px;line-height:11.5px;color:#000;transform:scaleX(0.93);">3.850</div>
<div class="t" style="left:739.59px;top:349px;font-size:11.5px;line-height:11.5px;color:#000;transform:scaleX(0.93);">395</div>
<div class="t" style="left:862.03px;top:349px;font-size:11.5px;line-height:11.5px;color:#000;transform:scaleX(0.93);">20</div>
<div class="t" style="left:28.55px;top:364px;font-size:11.5px;line-height:11.5px;color:#000;">Level 1</div>
<div class="t" style="left:190.34px;top:364px;font-size:11.5px;line-height:11.5px;color:#000;">3</div>
<div class="t" style="left:236.38px;top:364px;font-size:11.5px;line-height:11.5px;color:#000;transform:scaleX(1.071);">Kitchen</div>
<div class="t" style="left:616.29px;top:364px;font-size:11.5px;line-height:11.5px;color:#000;transform:scaleX(0.93);">102,6</div>
<div class="t" style="left:673.24px;top:364px;font-size:11.5px;line-height:11.5px;color:#000;transform:scaleX(0.93);">3.850</div>
<div class="t" style="left:739.59px;top:364px;font-size:11.5px;line-height:11.5px;color:#000;transform:scaleX(0.93);">395</div>
<div class="t" style="left:862.06px;top:364px;font-size:11.5px;line-height:11.5px;color:#000;transform:scaleX(0.93);">25</div>
<div class="t" style="left:28.55px;top:379px;font-size:11.5px;line-height:11.5px;color:#000;">Level 1</div>
<div class="t" style="left:190.34px;top:379px;font-size:11.5px;line-height:11.5px;color:#000;">4</div>
<div class="t" style="left:236.81px;top:379px;font-size:11.5px;line-height:11.5px;color:#000;transform:scaleX(1.081);">Office</div>
<div class="t" style="left:616.24px;top:379px;font-size:11.5px;line-height:11.5px;color:#000;transform:scaleX(0.93);">155,0</div>
<div class="t" style="left:673.24px;top:379px;font-size:11.5px;line-height:11.5px;color:#000;transform:scaleX(0.93);">3.850</div>
<div class="t" style="left:739.70px;top:379px;font-size:11.5px;line-height:11.5px;color:#000;transform:scaleX(0.93);">597</div>
<div class="t" style="left:862.03px;top:379px;font-size:11.5px;line-height:11.5px;color:#000;transform:scaleX(0.93);">10</div>
<div class="t" style="left:28.55px;top:394px;font-size:11.5px;line-height:11.5px;color:#000;">Level 1</div>
<div class="t" style="left:190.31px;top:394px;font-size:11.5px;line-height:11.5px;color:#000;">5</div>
<div class="t" style="left:237.14px;top:394px;font-size:11.5px;line-height:11.5px;color:#000;transform:scaleX(1.001);">Tech Room 1</div>
<div class="t" style="left:616.37px;top:394px;font-size:11.5px;line-height:11.5px;color:#000;transform:scaleX(0.93);">136,7</div>
<div class="t" style="left:673.24px;top:394px;font-size:11.5px;line-height:11.5px;color:#000;transform:scaleX(0.93);">3.850</div>
<div class="t" style="left:739.62px;top:394px;font-size:11.5px;line-height:11.5px;color:#000;transform:scaleX(0.93);">526</div>
<div class="t" style="left:867.99px;top:394px;font-size:11.5px;line-height:11.5px;color:#000;transform:scaleX(0.93);">5</div>
<div class="t" style="left:28.55px;top:409px;font-size:11.5px;line-height:11.5px;color:#000;">Level 2</div>
<div class="t" style="left:190.27px;top:409px;font-size:11.5px;line-height:11.5px;color:#000;">6</div>
<div class="t" style="left:237.14px;top:409px;font-size:11.5px;line-height:11.5px;color:#000;transform:scaleX(1.001);">Tech Room 2</div>
<div class="t" style="left:622.25px;top:409px;font-size:11.5px;line-height:11.5px;color:#000;transform:scaleX(0.93);">97,3</div>
<div class="t" style="left:673.24px;top:409px;font-size:11.5px;line-height:11.5px;color:#000;transform:scaleX(0.93);">3.450</div>
<div class="t" style="left:739.62px;top:409px;font-size:11.5px;line-height:11.5px;color:#000;transform:scaleX(0.93);">336</div>
<div class="t" style="left:862.08px;top:409px;font-size:11.5px;line-height:11.5px;color:#000;transform:scaleX(0.93);">26</div>
<div class="t" style="left:28.55px;top:424px;font-size:11.5px;line-height:11.5px;color:#000;">Level 2</div>
<div class="t" style="left:190.31px;top:424px;font-size:11.5px;line-height:11.5px;color:#000;">7</div>
<div class="t" style="left:237.14px;top:424px;font-size:11.5px;line-height:11.5px;color:#000;transform:scaleX(1.001);">Tech Room 3</div>
<div class="t" style="left:616.29px;top:424px;font-size:11.5px;line-height:11.5px;color:#000;transform:scaleX(0.93);">102,6</div>
<div class="t" style="left:673.24px;top:424px;font-size:11.5px;line-height:11.5px;color:#000;transform:scaleX(0.93);">3.450</div>
<div class="t" style="left:739.46px;top:424px;font-size:11.5px;line-height:11.5px;color:#000;transform:scaleX(0.93);">354</div>
<div class="t" style="left:862.16px;top:424px;font-size:11.5px;line-height:11.5px;color:#000;transform:scaleX(0.93);">27</div>
<div class="t" style="left:28.55px;top:439px;font-size:11.5px;line-height:11.5px;color:#000;">Level 2</div>
<div class="t" style="left:190.31px;top:439px;font-size:11.5px;line-height:11.5px;color:#000;">8</div>
<div class="t" style="left:236.38px;top:439px;font-size:11.5px;line-height:11.5px;color:#000;transform:scaleX(1.071);">Kitchen</div>
<div class="t" style="left:616.29px;top:439px;font-size:11.5px;line-height:11.5px;color:#000;transform:scaleX(0.93);">102,6</div>
<div class="t" style="left:673.24px;top:439px;font-size:11.5px;line-height:11.5px;color:#000;transform:scaleX(0.93);">3.450</div>
<div class="t" style="left:739.46px;top:439px;font-size:11.5px;line-height:11.5px;color:#000;transform:scaleX(0.93);">354</div>
<div class="t" style="left:862.03px;top:439px;font-size:11.5px;line-height:11.5px;color:#000;transform:scaleX(0.93);">20</div>
<div class="t" style="left:28.55px;top:454px;font-size:11.5px;line-height:11.5px;color:#000;">Level 2</div>
<div class="t" style="left:190.29px;top:454px;font-size:11.5px;line-height:11.5px;color:#000;">9</div>
<div class="t" style="left:236.35px;top:454px;font-size:11.5px;line-height:11.5px;color:#000;transform:scaleX(1.105);">Main Office</div>
<div class="t" style="left:616.24px;top:454px;font-size:11.5px;line-height:11.5px;color:#000;transform:scaleX(0.93);">155,0</div>
<div class="t" style="left:673.24px;top:454px;font-size:11.5px;line-height:11.5px;color:#000;transform:scaleX(0.93);">3.450</div>
<div class="t" style="left:739.59px;top:454px;font-size:11.5px;line-height:11.5px;color:#000;transform:scaleX(0.93);">535</div>
<div class="t" style="left:862.03px;top:454px;font-size:11.5px;line-height:11.5px;color:#000;transform:scaleX(0.93);">30</div>
<div class="t" style="left:28.55px;top:469px;font-size:11.5px;line-height:11.5px;color:#000;">Level 2</div>
<div class="t" style="left:186.90px;top:469px;font-size:11.5px;line-height:11.5px;color:#000;">10</div>
<div class="t" style="left:236.38px;top:469px;font-size:11.5px;line-height:11.5px;color:#000;transform:scaleX(1.071);">Meeting Room</div>
<div class="t" style="left:616.37px;top:469px;font-size:11.5px;line-height:11.5px;color:#000;transform:scaleX(0.93);">136,7</div>
<div class="t" style="left:673.24px;top:469px;font-size:11.5px;line-height:11.5px;color:#000;transform:scaleX(0.93);">3.450</div>
<div class="t" style="left:739.70px;top:469px;font-size:11.5px;line-height:11.5px;color:#000;transform:scaleX(0.93);">472</div>
<div class="t" style="left:862.06px;top:469px;font-size:11.5px;line-height:11.5px;color:#000;transform:scaleX(0.93);">35</div>
<div class="t" style="left:28.55px;top:484px;font-size:11.5px;line-height:11.5px;color:#000;">Level 3</div>
<div class="t" style="left:187.38px;top:484px;font-size:11.5px;line-height:11.5px;color:#000;">11</div>
<div class="t" style="left:236.38px;top:484px;font-size:11.5px;line-height:11.5px;color:#000;transform:scaleX(1.071);">Meeting Room</div>
<div class="t" style="left:622.25px;top:484px;font-size:11.5px;line-height:11.5px;color:#000;transform:scaleX(0.93);">97,3</div>
<div class="t" style="left:673.29px;top:484px;font-size:11.5px;line-height:11.5px;color:#000;transform:scaleX(0.93);">3.958</div>
<div class="t" style="left:739.59px;top:484px;font-size:11.5px;line-height:11.5px;color:#000;transform:scaleX(0.93);">385</div>
<div class="t" style="left:862.03px;top:484px;font-size:11.5px;line-height:11.5px;color:#000;transform:scaleX(0.93);">20</div>
<div class="t" style="left:28.55px;top:499px;font-size:11.5px;line-height:11.5px;color:#000;">Level 3</div>
<div class="t" style="left:186.97px;top:499px;font-size:11.5px;line-height:11.5px;color:#000;">12</div>
<div class="t" style="left:236.38px;top:499px;font-size:11.5px;line-height:11.5px;color:#000;transform:scaleX(1.071);">Kitchen</div>
<div class="t" style="left:616.29px;top:499px;font-size:11.5px;line-height:11.5px;color:#000;transform:scaleX(0.93);">102,6</div>
<div class="t" style="left:673.29px;top:499px;font-size:11.5px;line-height:11.5px;color:#000;transform:scaleX(0.93);">3.958</div>
<div class="t" style="left:739.62px;top:499px;font-size:11.5px;line-height:11.5px;color:#000;transform:scaleX(0.93);">406</div>
<div class="t" style="left:867.99px;top:499px;font-size:11.5px;line-height:11.5px;color:#000;transform:scaleX(0.93);">5</div>
<div class="t" style="left:28.55px;top:514px;font-size:11.5px;line-height:11.5px;color:#000;">Level 3</div>
<div class="t" style="left:186.93px;top:514px;font-size:11.5px;line-height:11.5px;color:#000;">13</div>
<div class="t" style="left:236.81px;top:514px;font-size:11.5px;line-height:11.5px;color:#000;transform:scaleX(1.072);">Office 1</div>
<div class="t" style="left:616.29px;top:514px;font-size:11.5px;line-height:11.5px;color:#000;transform:scaleX(0.93);">102,6</div>
<div class="t" style="left:673.37px;top:514px;font-size:11.5px;line-height:11.5px;color:#000;transform:scaleX(0.93);">3.987</div>
<div class="t" style="left:739.65px;top:514px;font-size:11.5px;line-height:11.5px;color:#000;transform:scaleX(0.93);">409</div>
<div class="t" style="left:868.02px;top:514px;font-size:11.5px;line-height:11.5px;color:#000;transform:scaleX(0.93);">8</div>
<div class="t" style="left:28.55px;top:529px;font-size:11.5px;line-height:11.5px;color:#000;">Level 3</div>
<div class="t" style="left:186.84px;top:529px;font-size:11.5px;line-height:11.5px;color:#000;">14</div>
<div class="t" style="left:236.81px;top:529px;font-size:11.5px;line-height:11.5px;color:#000;transform:scaleX(1.072);">Office 2</div>
<div class="t" style="left:616.24px;top:529px;font-size:11.5px;line-height:11.5px;color:#000;transform:scaleX(0.93);">155,0</div>
<div class="t" style="left:673.37px;top:529px;font-size:11.5px;line-height:11.5px;color:#000;transform:scaleX(0.93);">3.967</div>
<div class="t" style="left:739.59px;top:529px;font-size:11.5px;line-height:11.5px;color:#000;transform:scaleX(0.93);">615</div>
<div class="t" style="left:862.03px;top:529px;font-size:11.5px;line-height:11.5px;color:#000;transform:scaleX(0.93);">10</div>
<div class="t" style="left:28.55px;top:544px;font-size:11.5px;line-height:11.5px;color:#000;">Level 3</div>
<div class="t" style="left:186.92px;top:544px;font-size:11.5px;line-height:11.5px;color:#000;">15</div>
<div class="t" style="left:237.14px;top:544px;font-size:11.5px;line-height:11.5px;color:#000;transform:scaleX(1.01);">Tech Room</div>
<div class="t" style="left:616.37px;top:544px;font-size:11.5px;line-height:11.5px;color:#000;transform:scaleX(0.93);">136,7</div>
<div class="t" style="left:673.29px;top:544px;font-size:11.5px;line-height:11.5px;color:#000;transform:scaleX(0.93);">3.966</div>
<div class="t" style="left:739.70px;top:544px;font-size:11.5px;line-height:11.5px;color:#000;transform:scaleX(0.93);">542</div>
<div class="t" style="left:868.05px;top:544px;font-size:11.5px;line-height:11.5px;color:#000;transform:scaleX(0.93);">9</div>
<div class="a" style="left:415px;top:332px;width:180px;height:240px;overflow:hidden">
<div class="t" style="left:5.64px;top:2px;font-size:11.5px;line-height:11.5px;color:#000;">18593e5f-0383-4a78-89fb-1abddc</div>
<div class="t" style="left:5.64px;top:17px;font-size:11.5px;line-height:11.5px;color:#000;">18593e5f-0383-4a78-89fb-1abddc</div>
<div class="t" style="left:5.64px;top:32px;font-size:11.5px;line-height:11.5px;color:#000;">18593e5f-0383-4a78-89fb-1abddc</div>
<div class="t" style="left:5.64px;top:47px;font-size:11.5px;line-height:11.5px;color:#000;">18593e5f-0383-4a78-89fb-1abddc</div>
<div class="t" style="left:5.64px;top:62px;font-size:11.5px;line-height:11.5px;color:#000;">18593e5f-0383-4a78-89fb-1abddc</div>
<div class="t" style="left:5.64px;top:77px;font-size:11.5px;line-height:11.5px;color:#000;">18593e5f-0383-4a78-89fb-1abddc</div>
<div class="t" style="left:5.64px;top:92px;font-size:11.5px;line-height:11.5px;color:#000;">18593e5f-0383-4a78-89fb-1abddc</div>
<div class="t" style="left:5.64px;top:107px;font-size:11.5px;line-height:11.5px;color:#000;">18593e5f-0383-4a78-89fb-1abddc</div>
<div class="t" style="left:5.64px;top:122px;font-size:11.5px;line-height:11.5px;color:#000;">18593e5f-0383-4a78-89fb-1abddc</div>
<div class="t" style="left:5.64px;top:137px;font-size:11.5px;line-height:11.5px;color:#000;">18593e5f-0383-4a78-89fb-1abddc</div>
<div class="t" style="left:5.64px;top:152px;font-size:11.5px;line-height:11.5px;color:#000;">18593e5f-0383-4a78-89fb-1abddc</div>
<div class="t" style="left:5.64px;top:167px;font-size:11.5px;line-height:11.5px;color:#000;">18593e5f-0383-4a78-89fb-1abddc</div>
<div class="t" style="left:5.64px;top:182px;font-size:11.5px;line-height:11.5px;color:#000;">18593e5f-0383-4a78-89fb-1abddc</div>
<div class="t" style="left:5.64px;top:197px;font-size:11.5px;line-height:11.5px;color:#000;">18593e5f-0383-4a78-89fb-1abddc</div>
<div class="t" style="left:5.64px;top:212px;font-size:11.5px;line-height:11.5px;color:#000;">18593e5f-0383-4a78-89fb-1abddc</div>
</div>
<div class="t" style="left:883.05px;top:559px;font-size:11.5px;line-height:11.5px;color:#000;">Level 1</div>
<div class="t" style="left:954.05px;top:559px;font-size:11.5px;line-height:11.5px;color:#000;transform:scaleX(0.95);">2002</div>
<div class="t" style="left:883.05px;top:574px;font-size:11.5px;line-height:11.5px;color:#000;">Level 2</div>
<div class="t" style="left:954.05px;top:574px;font-size:11.5px;line-height:11.5px;color:#000;transform:scaleX(0.95);">2003</div>
<div class="t" style="left:998.98px;top:574px;font-size:11.5px;line-height:11.5px;color:#000;">Space</div>
<div class="t" style="left:1153.10px;top:574px;font-size:11.5px;line-height:11.5px;color:#000;transform:scaleX(0.93);">20,0</div>
<div class="t" style="left:883.05px;top:589px;font-size:11.5px;line-height:11.5px;color:#000;">Level 3</div>
<div class="t" style="left:954.05px;top:589px;font-size:11.5px;line-height:11.5px;color:#000;transform:scaleX(0.95);">2004</div>
<div class="t" style="left:998.98px;top:589px;font-size:11.5px;line-height:11.5px;color:#000;">Space</div>
<div class="t" style="left:1153.10px;top:589px;font-size:11.5px;line-height:11.5px;color:#000;transform:scaleX(0.93);">30,0</div>
<div class="t" style="left:883.05px;top:604px;font-size:11.5px;line-height:11.5px;color:#000;">Level 4</div>
<div class="t" style="left:954.05px;top:604px;font-size:11.5px;line-height:11.5px;color:#000;transform:scaleX(0.95);">2005</div>
<div class="t" style="left:998.98px;top:604px;font-size:11.5px;line-height:11.5px;color:#000;">Space</div>
<div class="t" style="left:1153.10px;top:604px;font-size:11.5px;line-height:11.5px;color:#000;transform:scaleX(0.93);">40,0</div>
<div class="t" style="left:883.05px;top:619px;font-size:11.5px;line-height:11.5px;color:#000;">Level 5</div>
<div class="t" style="left:954.05px;top:619px;font-size:11.5px;line-height:11.5px;color:#000;transform:scaleX(0.95);">2006</div>
<div class="t" style="left:998.98px;top:619px;font-size:11.5px;line-height:11.5px;color:#000;">Space</div>
<div class="t" style="left:1153.10px;top:619px;font-size:11.5px;line-height:11.5px;color:#000;transform:scaleX(0.93);">50,0</div>
<div class="t" style="left:883.05px;top:634px;font-size:11.5px;line-height:11.5px;color:#000;">Level 6</div>
<div class="t" style="left:954.05px;top:634px;font-size:11.5px;line-height:11.5px;color:#000;transform:scaleX(0.95);">2007</div>
<div class="t" style="left:998.98px;top:634px;font-size:11.5px;line-height:11.5px;color:#000;">Space</div>
<div class="t" style="left:1153.10px;top:634px;font-size:11.5px;line-height:11.5px;color:#000;transform:scaleX(0.93);">60,0</div>
<div class="t" style="left:883.05px;top:649px;font-size:11.5px;line-height:11.5px;color:#000;">Level 7</div>
<div class="t" style="left:954.05px;top:649px;font-size:11.5px;line-height:11.5px;color:#000;transform:scaleX(0.95);">2008</div>
<div class="t" style="left:998.98px;top:649px;font-size:11.5px;line-height:11.5px;color:#000;">Space</div>
<div class="t" style="left:1153.10px;top:649px;font-size:11.5px;line-height:11.5px;color:#000;transform:scaleX(0.93);">70,0</div>
<div class="t" style="left:883.05px;top:664px;font-size:11.5px;line-height:11.5px;color:#000;">Level 8</div>
<div class="t" style="left:954.05px;top:664px;font-size:11.5px;line-height:11.5px;color:#000;transform:scaleX(0.95);">2009</div>
<div class="t" style="left:998.98px;top:664px;font-size:11.5px;line-height:11.5px;color:#000;">Space</div>
<div class="t" style="left:1153.10px;top:664px;font-size:11.5px;line-height:11.5px;color:#000;transform:scaleX(0.93);">80,0</div>
<div class="t" style="left:883.05px;top:679px;font-size:11.5px;line-height:11.5px;color:#000;">Level 9</div>
<div class="t" style="left:954.05px;top:679px;font-size:11.5px;line-height:11.5px;color:#000;transform:scaleX(0.95);">2010</div>
<div class="t" style="left:998.98px;top:679px;font-size:11.5px;line-height:11.5px;color:#000;">Space</div>
<div class="t" style="left:1153.10px;top:679px;font-size:11.5px;line-height:11.5px;color:#000;transform:scaleX(0.93);">90,0</div>
<div class="t" style="left:883.05px;top:694px;font-size:11.5px;line-height:11.5px;color:#000;">Level 10</div>
<div class="t" style="left:954.05px;top:694px;font-size:11.5px;line-height:11.5px;color:#000;transform:scaleX(0.95);">2011</div>
<div class="t" style="left:998.98px;top:694px;font-size:11.5px;line-height:11.5px;color:#000;">Space</div>
<div class="t" style="left:1147.14px;top:694px;font-size:11.5px;line-height:11.5px;color:#000;transform:scaleX(0.93);">100,0</div>
<div class="t" style="left:883.05px;top:709px;font-size:11.5px;line-height:11.5px;color:#000;">Level 11</div>
<div class="t" style="left:954.05px;top:709px;font-size:11.5px;line-height:11.5px;color:#000;transform:scaleX(0.95);">2012</div>
<div class="t" style="left:998.98px;top:709px;font-size:11.5px;line-height:11.5px;color:#000;">Space</div>
<div class="t" style="left:1147.94px;top:709px;font-size:11.5px;line-height:11.5px;color:#000;transform:scaleX(0.93);">110,0</div>
<div class="t" style="left:883.05px;top:724px;font-size:11.5px;line-height:11.5px;color:#000;">Level 12</div>
<div class="t" style="left:954.05px;top:724px;font-size:11.5px;line-height:11.5px;color:#000;transform:scaleX(0.95);">2013</div>
<div class="t" style="left:998.98px;top:724px;font-size:11.5px;line-height:11.5px;color:#000;">Space</div>
<div class="t" style="left:1147.14px;top:724px;font-size:11.5px;line-height:11.5px;color:#000;transform:scaleX(0.93);">120,0</div>
<div class="t" style="left:883.05px;top:739px;font-size:11.5px;line-height:11.5px;color:#000;">Level 13</div>
<div class="t" style="left:954.05px;top:739px;font-size:11.5px;line-height:11.5px;color:#000;transform:scaleX(0.95);">2014</div>
<div class="t" style="left:998.98px;top:739px;font-size:11.5px;line-height:11.5px;color:#000;">Space</div>
<div class="t" style="left:1147.14px;top:739px;font-size:11.5px;line-height:11.5px;color:#000;transform:scaleX(0.93);">130,0</div>
<div class="t" style="left:883.05px;top:754px;font-size:11.5px;line-height:11.5px;color:#000;">Level 14</div>
<div class="t" style="left:954.05px;top:754px;font-size:11.5px;line-height:11.5px;color:#000;transform:scaleX(0.95);">2015</div>
<div class="t" style="left:998.98px;top:754px;font-size:11.5px;line-height:11.5px;color:#000;">Space</div>
<div class="t" style="left:1147.14px;top:754px;font-size:11.5px;line-height:11.5px;color:#000;transform:scaleX(0.93);">140,0</div>
</body></html>
